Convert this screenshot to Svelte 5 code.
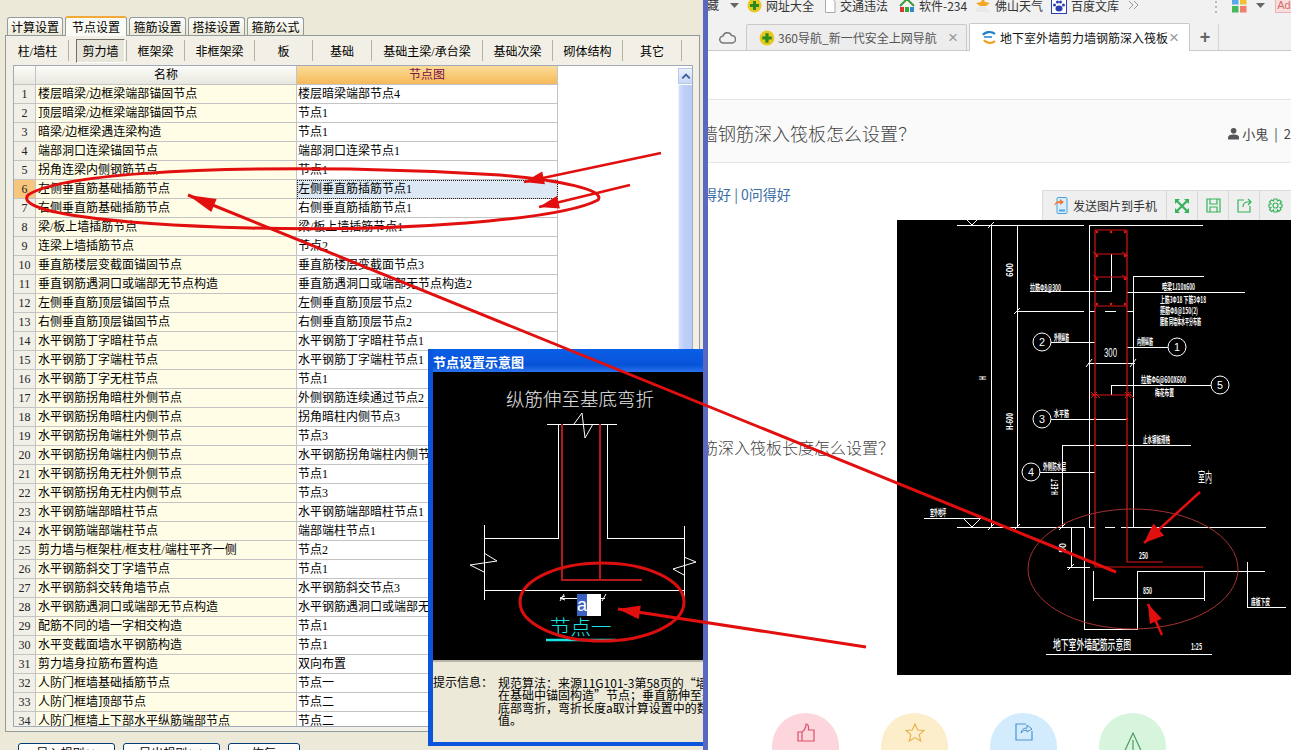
<script>
  const tabs = [
    { label: '计算设置', w: 56 },
    { label: '节点设置', w: 62, active: true },
    { label: '箍筋设置', w: 57 },
    { label: '搭接设置', w: 57 },
    { label: '箍筋公式', w: 57 }
  ];
  const subs = [
    { label: '柱/墙柱', w: 62 },
    { label: '剪力墙', w: 58, active: true },
    { label: '框架梁', w: 58 },
    { label: '非框架梁', w: 70 },
    { label: '板', w: 58 },
    { label: '基础', w: 59 },
    { label: '基础主梁/承台梁', w: 111 },
    { label: '基础次梁', w: 70 },
    { label: '砌体结构', w: 70 },
    { label: '其它', w: 59 }
  ];
  const rows = [
    ['楼层暗梁/边框梁端部锚固节点', '楼层暗梁端部节点4'],
    ['顶层暗梁/边框梁端部锚固节点', '节点1'],
    ['暗梁/边框梁遇连梁构造', '节点1'],
    ['端部洞口连梁锚固节点', '端部洞口连梁节点1'],
    ['拐角连梁内侧钢筋节点', '节点1'],
    ['左侧垂直筋基础插筋节点', '左侧垂直筋插筋节点1'],
    ['右侧垂直筋基础插筋节点', '右侧垂直筋插筋节点1'],
    ['梁/板上墙插筋节点', '梁/板上墙插筋节点1'],
    ['连梁上墙插筋节点', '节点2'],
    ['垂直筋楼层变截面锚固节点', '垂直筋楼层变截面节点3'],
    ['垂直钢筋遇洞口或端部无节点构造', '垂直筋遇洞口或端部无节点构造2'],
    ['左侧垂直筋顶层锚固节点', '左侧垂直筋顶层节点2'],
    ['右侧垂直筋顶层锚固节点', '右侧垂直筋顶层节点2'],
    ['水平钢筋丁字暗柱节点', '水平钢筋丁字暗柱节点1'],
    ['水平钢筋丁字端柱节点', '水平钢筋丁字端柱节点1'],
    ['水平钢筋丁字无柱节点', '节点1'],
    ['水平钢筋拐角暗柱外侧节点', '外侧钢筋连续通过节点2'],
    ['水平钢筋拐角暗柱内侧节点', '拐角暗柱内侧节点3'],
    ['水平钢筋拐角端柱外侧节点', '节点3'],
    ['水平钢筋拐角端柱内侧节点', '水平钢筋拐角端柱内侧节点2'],
    ['水平钢筋拐角无柱外侧节点', '节点1'],
    ['水平钢筋拐角无柱内侧节点', '节点3'],
    ['水平钢筋端部暗柱节点', '水平钢筋端部暗柱节点1'],
    ['水平钢筋端部端柱节点', '端部端柱节点1'],
    ['剪力墙与框架柱/框支柱/端柱平齐一侧', '节点2'],
    ['水平钢筋斜交丁字墙节点', '节点1'],
    ['水平钢筋斜交转角墙节点', '水平钢筋斜交节点3'],
    ['水平钢筋遇洞口或端部无节点构造', '水平钢筋遇洞口或端部无节点构造2'],
    ['配筋不同的墙一字相交构造', '节点1'],
    ['水平变截面墙水平钢筋构造', '节点1'],
    ['剪力墙身拉筋布置构造', '双向布置'],
    ['人防门框墙基础插筋节点', '节点一'],
    ['人防门框墙顶部节点', '节点二'],
    ['人防门框墙上下部水平纵筋端部节点', '节点二']
  ];

  const head = (x1, y1, x2, y2, len, hw) => {
    const d = Math.hypot(x2 - x1, y2 - y1);
    const ux = (x2 - x1) / d;
    const uy = (y2 - y1) / d;
    const bx = x2 - ux * len;
    const by = y2 - uy * len;
    return `${x2},${y2} ${bx - uy * hw},${by + ux * hw} ${bx + uy * hw},${by - ux * hw}`;
  };
  const arrows = [
    { x1: 661, y1: 153, x2: 524, y2: 182, len: 20, hw: 6.5, w: 2.5 },
    { x1: 630, y1: 185, x2: 539, y2: 207, len: 20, hw: 6.5, w: 2.5 },
    { x1: 1116, y1: 572, x2: 188, y2: 195, len: 28, hw: 7, w: 3 },
    { x1: 866, y1: 647, x2: 618, y2: 609, len: 22, hw: 7, w: 3 },
    { x1: 1200, y1: 492, x2: 1144, y2: 543, len: 20, hw: 8, w: 2.5 },
    { x1: 1162, y1: 635, x2: 1148, y2: 604, len: 19, hw: 6.5, w: 2.5 }
  ];
  const dots = [
    [1097, 232], [1111, 232], [1125, 232], [1097, 256], [1125, 256], [1097, 279], [1125, 279],
    [1097, 304], [1111, 304], [1125, 304], [1095, 419], [1127, 419], [1095, 445], [1127, 445]
  ];
</script>

<div class="screen">
  <section class="left">
    <nav class="tabs">
      {#each tabs as t}
        <button class="tab" class:on={t.active} style="width:{t.w}px">{t.label}</button>
      {/each}
    </nav>
    <div class="panel">
      <div class="subs">
        {#each subs as s}
          <div class="sub" style="width:{s.w}px"><span class:pressed={s.active}>{s.label}</span></div>
        {/each}
      </div>
      <div class="grid">
        <div class="table">
          <div class="hd"></div>
          <div class="hd name">名称</div>
          <div class="hd node">节点图</div>
          {#each rows as r, i}
            <div class="num" class:cur={i === 5}>{i + 1}</div>
            <div class="nm">{r[0]}</div>
            <div class="val" class:sel={i === 5}>{r[1]}</div>
          {/each}
        </div>
        <div class="bar">
          <div class="up">
            <svg width="15" height="15" viewBox="0 0 15 15"><path d="M3.5 9.5 7.5 5.5 11.5 9.5" fill="none" stroke="#3f5f9f" stroke-width="2"/></svg>
          </div>
          <div class="thumb"></div>
        </div>
      </div>
    </div>
    <div class="actions">
      <button class="btn b1">导入规则(I)</button>
      <button class="btn b1">导出规则(O)</button>
      <button class="btn b2">恢复</button>
    </div>

    <div class="dialog">
      <div class="title">节点设置示意图</div>
      <div class="canvas">
        <svg width="270" height="288" viewBox="433 372 270 288">
          <text x="580" y="406" class="heading">纵筋伸至基底弯折</text>
          <path class="w" d="M547 424H617M558 424V538H484M607 424V538H684M484 525V600M684 526V600M484 590H684M560 598H605"/>
          <path class="thin" d="M574 424 582 413 585 438 593 424M484 553 497 561 470 565 484 572M684 557 696 562 673 569 684 575M560 601 564 594M602 601 606 594M565 596 560 598 565 600"/>
          <path class="rebar" d="M562 424V580H642M600 424V580"/>
          <rect x="577" y="594" width="10" height="22" fill="#3a62c0"/>
          <rect x="587" y="594" width="14" height="22" fill="#fff"/>
          <text x="577" y="611" class="letter">a</text>
          <text x="550" y="635" class="cyan">节点一</text>
          <path d="M546 640H616" stroke="#19e5e5" stroke-width="2.5"/>
          <ellipse cx="602" cy="602" rx="82" ry="39" fill="none" stroke="#dc0f0f" stroke-width="3"/>
        </svg>
      </div>
      <div class="info">
        <div class="label">提示信息：</div>
        <div class="lines">
          <p>规范算法：来源11G101-3第58页的“墙身竖向分布钢筋</p>
          <p>在基础中锚固构造”节点；垂直筋伸至基础</p>
          <p>底部弯折，弯折长度a取计算设置中的数</p>
          <p>值。</p>
        </div>
      </div>
    </div>
  </section>

  <div class="edge"></div>

  <section class="right">
    <div class="favs">
      <span class="clip">藏</span>
      <svg class="caret" width="9" height="5" viewBox="0 0 9 5"><path d="M0 0H9L4.5 5Z" fill="#666"/></svg>
      <span class="fav f1">
        <svg width="15" height="15" viewBox="0 0 15 15"><circle cx="7.5" cy="7.5" r="7" fill="#e8c81e"/><path d="M7.5 3V12M3 7.5H12" stroke="#2b8a1e" stroke-width="3"/></svg>网址大全
      </span>
      <span class="fav f2">
        <svg width="12" height="15" viewBox="0 0 12 15"><path d="M1.5.5H8L11 3.5V14.500H1.5Z" fill="#fff" stroke="#aaa"/></svg>交通违法
      </span>
      <span class="fav f3">
        <svg width="16" height="15" viewBox="0 0 16 15"><path d="M1 8 8 1 15 8" fill="none" stroke="#3c9a3c" stroke-width="2"/><rect x="1" y="9" width="4" height="5" fill="#d33"/><rect x="6" y="9" width="4" height="5" fill="#3a3"/><rect x="11" y="9" width="4" height="5" fill="#38c"/></svg>软件-234
      </span>
      <span class="fav f4">
        <svg width="16" height="15" viewBox="0 0 16 15"><path d="M8 0 10 4 15 5 11 8 5 8 1 5 6 4Z" fill="#f5a623"/><path d="M1 14Q1 9 6 9 10 7 15 14Z" fill="#e8e8e8"/></svg>佛山天气
      </span>
      <span class="fav f5">
        <svg width="16" height="16" viewBox="0 0 16 16"><rect x=".5" y=".5" width="15" height="15" fill="#fff" stroke="#2a3fb0"/><ellipse cx="8" cy="10.500" rx="3.500" ry="3" fill="#2a3fb0"/><circle cx="3.500" cy="7" r="1.500" fill="#2a3fb0"/><circle cx="6.500" cy="4" r="1.500" fill="#2a3fb0"/><circle cx="9.500" cy="4" r="1.500" fill="#2a3fb0"/><circle cx="12.500" cy="7" r="1.500" fill="#2a3fb0"/></svg>百度文库
      </span>
      <svg class="more" width="11" height="10" viewBox="0 0 11 10"><path d="M1 1 5 5 1 9M6 1 10 5 6 9" fill="none" stroke="#999"/></svg>
      <span class="dots"></span>
      <svg class="apps" width="15" height="15" viewBox="0 0 15 15"><rect width="6.500" height="6.500" fill="#5aa7e8"/><rect x="8" width="6.500" height="6.500" fill="#f2c230"/><rect y="8" width="6.500" height="6.500" fill="#49b85a"/><rect x="8" y="8" width="6.500" height="6.500" fill="#ef7f6a"/></svg>
      <svg class="caret2" width="9" height="5" viewBox="0 0 9 5"><path d="M0 0H9L4.500 5Z" fill="#666"/></svg>
      <span class="ad">Ad</span>
    </div>
    <div class="chrome">
      <svg class="cloud" width="17" height="13" viewBox="0 0 17 13"><path d="M4.500 12A3.500 3.500 0 0 1 4 5 4.500 4.500 0 0 1 12.500 4.500 3.700 3.700 0 0 1 13 12Z" fill="none" stroke="#777" stroke-width="1.500"/></svg>
      <div class="ctab">
        <svg width="16" height="16" viewBox="0 0 15 15"><circle cx="7.500" cy="7.500" r="7" fill="#e8c81e"/><path d="M7.500 3V12M3 7.500H12" stroke="#2b8a1e" stroke-width="3"/></svg>
        <span class="tt">360导航_新一代安全上网导航</span><span class="x">×</span>
      </div>
      <div class="ctab live">
        <svg width="16" height="15" viewBox="0 0 16 15"><path d="M2 5A7 5 0 0 1 14 4" fill="none" stroke="#1b7fd0" stroke-width="2.200"/><path d="M3 7H11" stroke="#1b7fd0" stroke-width="1.500"/><path d="M3 10A6.500 5 0 0 0 14 11" fill="none" stroke="#f0a020" stroke-width="2.200"/></svg>
        <span class="tt">地下室外墙剪力墙钢筋深入筏板</span><span class="x">×</span>
      </div>
      <span class="plus">+</span>
    </div>
    <div class="gap"></div>
    <div class="qhead">
      <h1>墙钢筋深入筏板怎么设置？</h1>
      <div class="user">
        <svg width="12" height="13" viewBox="0 0 12 13"><circle cx="6" cy="3.500" r="3" fill="#555"/><path d="M0 13V11Q0 7.500 6 7.500T12 11V13Z" fill="#555"/></svg>
        <span>小鬼</span><span class="pipe">|</span><span>2</span>
      </div>
    </div>
    <div class="links">得好 | 0问得好</div>

    <div class="picbar">
      <div class="send">
        <svg width="14" height="17" viewBox="0 0 14 17"><rect x="3" y=".5" width="10" height="16" rx="1" fill="#d8ecfa" stroke="#4aa3dc"/><rect x="5" y="12.500" width="6" height="2" fill="#4aa3dc"/><path d="M0 9Q1 4 6 4V2L10 5 6 8V6Q2 6 0 9Z" fill="#f07a30"/></svg>
        发送图片到手机
      </div>
      <div class="pb">
        <svg width="14" height="14" viewBox="0 0 14 14"><path d="M1 1 13 13M13 1 1 13" stroke="#35b35a" stroke-width="2.200"/><path d="M0 0H5L0 5ZM14 0V5L9 0ZM0 14V9L5 14ZM14 14H9L14 9Z" fill="#35b35a"/></svg>
      </div>
      <div class="pb">
        <svg width="15" height="15" viewBox="0 0 15 15"><path d="M1 1H14V14H1ZM4 1V6H11V1M4 14V9H11V14" fill="none" stroke="#35b35a" stroke-width="1.200"/></svg>
      </div>
      <div class="pb">
        <svg width="15" height="15" viewBox="0 0 15 15"><path d="M7 2H1V14H13V8M6 9Q6 4 11 4H14M11 1 14 4 11 7" fill="none" stroke="#35b35a" stroke-width="1.200"/></svg>
      </div>
      <div class="pb last">
        <svg width="15" height="15" viewBox="0 0 15 15"><circle cx="7.500" cy="7.500" r="2.500" fill="none" stroke="#35b35a" stroke-width="1.200"/><path d="M6 1H9L9.500 3 11.500 2 13.500 4 12 5.800 14 6.500V9L12 9.500 13 11.500 11 13.500 9.500 12 9 14H6L5.500 12 3.500 13.500 1.500 11.500 3 9.500 1 9V6.500L3 5.800 1.500 4 3.500 2 5.500 3Z" fill="none" stroke="#35b35a" stroke-width="1.200"/></svg>
      </div>
    </div>

    <div class="body">
      <p class="q2">筋深入筏板长度怎么设置？</p>
      <div class="cad">
        <svg width="394" height="455" viewBox="897 220 394 455">
          <path class="w" d="M957 225H1084M1089 225H1203M991 225V527M1017 225V527M1089 225V527M1133 276V527M1133 276H1204M1017 311H1084M1089 311H1095M1105 311H1116M1127 311H1133M1030 291H1111V254M1127 292H1245M1051 342H1095M1127 347H1168M1088 363H1135M1111 395V385H1211M1051 419H1127M1062 445H1191M1062 445V527M1040 472H1095M957 527H1084M1089 527H1095M1105 527H1115M1121 527H1266M924 518H981M1084 527V629H1137V571H1265M1093 571V601M1204 571V601M1093 598H1205M1071 527V567M1067 567H1090M1247 562V607H1286M1046 654H1212"/>
          <path class="thin" d="M963 518 972 527 981 518M967 220 972 225 977 220M1086 367 1092 359M1130 367 1136 359M988 228 994 222M1014 314 1020 308M988 530 994 524M1014 530 1020 524M1059 530 1065 524M1068 570 1074 564"/>
          <path class="red" d="M1095 230V567H1203M1127 230V562H1163M1095 230H1127M1095 254H1127M1095 277H1127M1095 306H1127M1091 395H1131"/>
          <path class="hatch" d="M1091 392 1097 398M1094 392 1100 398M1091 398 1097 392M1125 392 1131 398M1128 392 1134 398M1125 398 1131 392M1093 252 1098 256M1122 252 1128 256M1093 275 1098 279M1122 275 1128 279"/>
          {#each dots as d}
            <circle cx={d[0]} cy={d[1]} r="1.300" fill="#e01818"/>
          {/each}
          <circle class="c" cx="1042" cy="342" r="9"/><circle class="c" cx="1177" cy="347" r="9"/><circle class="c" cx="1220" cy="385" r="9"/><circle class="c" cx="1042" cy="419" r="9"/><circle class="c" cx="1031" cy="472" r="9"/>
          <text class="t" x="1039" y="346" textLength="6" lengthAdjust="spacingAndGlyphs">2</text>
          <text class="t" x="1174" y="351" textLength="6" lengthAdjust="spacingAndGlyphs">1</text>
          <text class="t" x="1217" y="389" textLength="6" lengthAdjust="spacingAndGlyphs">5</text>
          <text class="t" x="1039" y="423" textLength="6" lengthAdjust="spacingAndGlyphs">3</text>
          <text class="t" x="1028" y="476" textLength="6" lengthAdjust="spacingAndGlyphs">4</text>
          <text class="big" x="1104" y="357" textLength="13" lengthAdjust="spacingAndGlyphs">300</text>
          <text class="s" x="1030" y="291" textLength="31" lengthAdjust="spacingAndGlyphs">拉筋Φ8@300</text>
          <text class="s" x="1162" y="290" textLength="33" lengthAdjust="spacingAndGlyphs">暗梁1J10x600</text>
          <text class="s" x="1160" y="303" textLength="46" lengthAdjust="spacingAndGlyphs">上筋3Φ18 下筋3Φ18</text>
          <text class="s" x="1160" y="314" textLength="38" lengthAdjust="spacingAndGlyphs">箍筋Φ8@150(2)</text>
          <text class="s" x="1160" y="325" textLength="41" lengthAdjust="spacingAndGlyphs">腰筋 同墙体水平分布筋</text>
          <text class="s" x="1054" y="341" textLength="15" lengthAdjust="spacingAndGlyphs">外侧纵筋</text>
          <text class="s" x="1137" y="345" textLength="16" lengthAdjust="spacingAndGlyphs">内侧纵筋</text>
          <text class="s" x="1141" y="383" textLength="45" lengthAdjust="spacingAndGlyphs">拉筋Φ6@600X600</text>
          <text class="s" x="1155" y="396" textLength="19" lengthAdjust="spacingAndGlyphs">梅花布置</text>
          <text class="s" x="1054" y="417" textLength="15" lengthAdjust="spacingAndGlyphs">水平筋</text>
          <text class="s" x="1143" y="443" textLength="27" lengthAdjust="spacingAndGlyphs">止水钢板规格</text>
          <text class="s" x="1043" y="470" textLength="23" lengthAdjust="spacingAndGlyphs">外侧防水层</text>
          <text class="s" x="930" y="516" textLength="16" lengthAdjust="spacingAndGlyphs">室外地坪</text>
          <text class="s" x="1139" y="559" textLength="9" lengthAdjust="spacingAndGlyphs">250</text>
          <text class="s" x="1143" y="594" textLength="9" lengthAdjust="spacingAndGlyphs">850</text>
          <text class="s" x="1251" y="605" textLength="19" lengthAdjust="spacingAndGlyphs">底板下皮</text>
          <text class="s" x="1191" y="650" textLength="11" lengthAdjust="spacingAndGlyphs">1:25</text>
          <text class="s" transform="translate(1013 277) rotate(-90)" textLength="14" lengthAdjust="spacingAndGlyphs">600</text>
          <text class="s" transform="translate(1013 430) rotate(-90)" textLength="17" lengthAdjust="spacingAndGlyphs">H-600</text>
          <text class="s" transform="translate(986 380) rotate(-90)" textLength="4" lengthAdjust="spacingAndGlyphs">H</text>
          <text class="s" transform="translate(1058 495) rotate(-90)" textLength="16" lengthAdjust="spacingAndGlyphs">H-EE-T</text>
          <text class="s" transform="translate(1066 553) rotate(-90)" textLength="10" lengthAdjust="spacingAndGlyphs">50</text>
          <text class="mid" x="1198" y="482" textLength="14" lengthAdjust="spacingAndGlyphs">室内</text>
          <text class="cap" x="1053" y="649" textLength="78" lengthAdjust="spacingAndGlyphs">地下室外墙配筋示意图</text>
          <ellipse cx="1133" cy="569" rx="105" ry="60" fill="none" stroke="#a83232"/>
        </svg>
      </div>
    </div>

    <div class="round">
      <div class="rc pink">
        <svg width="18" height="19" viewBox="0 0 18 19"><path d="M5 9H1V18H5ZM5 9Q9 6 9 1 12 1 11.500 7H17V18H5" fill="none" stroke="#d9506a" stroke-width="1.200"/></svg>
      </div>
      <div class="rc yellow">
        <svg width="20" height="19" viewBox="0 0 20 19"><path d="M10 1 12.700 7 19 7.500 14.200 11.600 15.700 18 10 14.600 4.300 18 5.800 11.600 1 7.500 7.300 7Z" fill="none" stroke="#e8b24a" stroke-width="1.200"/></svg>
      </div>
      <div class="rc blue">
        <svg width="18" height="18" viewBox="0 0 18 18"><path d="M11 1H1V17H17V8" fill="none" stroke="#4f93cf" stroke-width="1.200"/><path d="M6 10Q7 5 12 5V2L17 6 12 9V7Q8 7 6 10Z" fill="none" stroke="#4f93cf"/></svg>
      </div>
      <div class="rc green">
        <svg width="24" height="26" viewBox="0 0 24 26"><path d="M12 1 23 25H1ZM12 8V19" fill="none" stroke="#4e9a62" stroke-width="1.200"/></svg>
      </div>
    </div>
  </section>

  <svg class="marks" width="1291" height="750" viewBox="0 0 1291 750">
    <path d="M350 169C200 167 60 174 28 195 15 211 100 224 250 228 400 232 560 220 598 200 606 190 560 180 500 175 450 172 400 170 350 169Z" fill="none" stroke="#e20f0f" stroke-width="3"/>
    {#each arrows as a}
      <line x1={a.x1} y1={a.y1} x2={a.x2} y2={a.y2} stroke="#e20f0f" stroke-width={a.w}/>
      <polygon points={head(a.x1, a.y1, a.x2, a.y2, a.len, a.hw)} fill="#e20f0f"/>
    {/each}
  </svg>
</div>

<style>
  :global(body) { margin: 0; background: #fff; }
  .screen {
    position: relative;
    display: flex;
    width: 1291px;
    height: 750px;
    overflow: hidden;
    font: 12px "Liberation Serif", "Noto Sans CJK SC", serif;
    color: #000;
  }
  button { font: inherit; color: inherit; padding: 0; }

  .left {
    position: relative;
    width: 703px;
    flex: none;
    padding: 15px 3px 0 5px;
    box-sizing: border-box;
    background: #ece9d8;
  }
  .edge { width: 5px; flex: none; background: #5a68bf; }
  .right { position: relative; flex: 1; min-width: 0; background: #fff; overflow: hidden; }

  .tabs { display: flex; align-items: flex-end; gap: 2px; height: 20px; padding-left: 2px; }
  .tab {
    height: 18px;
    box-sizing: border-box;
    border: 1px solid #919b9c;
    border-bottom: 0;
    border-radius: 3px 3px 0 0;
    background: linear-gradient(#fff, #ece9d8);
  }
  .tab.on {
    height: 20px;
    border-top: 2px solid #f2a93b;
    background: #fbfbf6;
    position: relative;
    top: 1px;
  }
  .panel {
    height: 697px;
    box-sizing: border-box;
    padding: 1px 6px 5px 7px;
    border: 1px solid #919b9c;
    background: #f2f0e6;
  }
  .subs { display: flex; height: 27px; margin-left: -6px; white-space: nowrap; }
  .sub {
    display: flex;
    align-items: center;
    justify-content: center;
    box-sizing: border-box;
    border-right: 1px solid #b5b2a4;
    margin: 3px 0;
  }
  .pressed {
    display: block;
    margin-left: 6px;
    padding: 2px 5px;
    border: 1px solid;
    border-color: #716f64 #fff #fff #716f64;
    background: #e8e6da;
  }
  .grid {
    display: flex;
    height: 662px;
    margin-top: 1px;
    box-sizing: border-box;
    border: 1px solid #a2a9b8;
    background: #fff;
    overflow: hidden;
  }
  .table {
    flex: none;
    width: 662px;
    display: grid;
    grid-template-columns: 22px 261px 261px;
    grid-auto-rows: 19px;
    align-content: start;
    line-height: 18px;
  }
  .table > div { box-sizing: border-box; white-space: nowrap; overflow: hidden; }
  .hd {
    background: linear-gradient(#fbfbf9, #e9e8df);
    border-right: 1px solid #c4c4c4;
    border-bottom: 1px solid #c4c4c4;
    text-align: center;
  }
  .hd.node { background: linear-gradient(#fbdc97, #f5b959); color: #7a0f4a; }
  .num {
    background: #f0efe8;
    text-align: center;
    border-right: 1px solid #c4c4c4;
    border-bottom: 1px solid #c4c4c4;
    color: #222;
  }
  .num.cur { background: #f8c57c; }
  .nm {
    background: #fffde6;
    padding-left: 2px;
    border-right: 1px solid #c4c4c4;
    border-bottom: 1px solid #c4c4c4;
  }
  .val {
    padding-left: 1px;
    border-right: 1px solid #c4c4c4;
    border-bottom: 1px solid #c4c4c4;
  }
  .val.sel { background: #dde8f5; outline: 1px dotted #222; outline-offset: -1px; }
  .bar { margin-left: 2px; width: 16px; display: flex; flex-direction: column; padding-top: 2px; }
  .up {
    height: 16px;
    display: flex;
    align-items: center;
    justify-content: center;
    background: linear-gradient(#eaf1fd, #c7d7f6);
    border: 1px solid #b7c9ea;
    box-sizing: border-box;
  }
  .thumb {
    flex: 1;
    background: linear-gradient(90deg, #d2defa, #bccff6 40%, #b8ccf4);
    border-left: 1px solid #eef3fe;
    border-right: 1px solid #eef3fe;
    margin-top: 1px;
  }
  .actions { display: flex; padding: 11px 0 0 13px; }
  .btn {
    height: 22px;
    margin-right: 8px;
    box-sizing: border-box;
    border: 1px solid #003c74;
    border-radius: 3px;
    background: linear-gradient(#fff, #f0efe6);
    padding-bottom: 3px;
  }
  .b1 { width: 97px; }
  .b2 { width: 72px; }

  .dialog {
    position: absolute;
    left: 428px;
    top: 349px;
    width: 275px;
    height: 397px;
    box-sizing: border-box;
    border: solid #0a55dc;
    border-width: 0 0 4px 5px;
    background: #ece9d8;
    overflow: hidden;
  }
  .title {
    height: 23px;
    margin-left: -5px;
    padding: 6px 0 0 5px;
    box-sizing: border-box;
    background: linear-gradient(#0a5fe6, #0753d8 70%, #2a73ee);
    color: #fff;
    font-size: 13px;
    font-weight: 700;
    line-height: 14px;
    font-family: "Noto Sans CJK SC", sans-serif;
  }
  .canvas { height: 288px; background: #000; }
  .canvas svg { display: block; }
  .w { fill: none; stroke: #fff; stroke-width: 1; shape-rendering: crispEdges; }
  .thin { fill: none; stroke: #fff; stroke-width: 1; }
  .rebar { fill: none; stroke: #b3181c; stroke-width: 2; }
  .heading { font-size: 18.500px; fill: #e6e6e6; text-anchor: middle; font-family: "Noto Sans CJK SC", sans-serif; font-weight: 300; }
  .letter { font-size: 18px; fill: #fff; font-family: "Liberation Sans", sans-serif; }
  .cyan { font-size: 20.500px; fill: #19e5e5; font-family: "Noto Sans CJK SC", sans-serif; font-weight: 300; }
  .info { display: flex; padding: 15px 0 0 0; border-top: 2px solid #b9b6a8; line-height: 12.300px; }
  .label { width: 65px; flex: none; }
  .lines { font-family: "Noto Sans CJK SC", sans-serif; }
  .lines p { margin: 0; white-space: nowrap; }

  .favs {
    position: relative;
    height: 30px;
    margin-top: -7px;
    background: #f1f1f1;
    font-family: "Noto Sans CJK SC", sans-serif;
    color: #333;
    line-height: 14px;
  }
  .clip { position: absolute; left: -1px; top: 5px; }
  .caret { position: absolute; left: 22px; top: 10px; }
  .fav { position: absolute; top: 5px; display: flex; align-items: center; gap: 4px; white-space: nowrap; }
  .f1 { left: 39px; }
  .f2 { left: 116px; }
  .f3 { left: 191px; }
  .f4 { left: 267px; }
  .f5 { left: 343px; }
  .more { position: absolute; left: 420px; top: 7px; }
  .dots { position: absolute; left: 507px; top: 8px; width: 2px; height: 14px; background: repeating-linear-gradient(#bbb 0 2px, transparent 2px 5px); }
  .apps { position: absolute; left: 524px; top: 5px; }
  .caret2 { position: absolute; left: 548px; top: 10px; }
  .ad { position: absolute; left: 567px; top: 5px; width: 18px; height: 15px; background: #f9dede; border: 1px solid #e8b4b4; color: #d76a6a; box-sizing: border-box; line-height: 13px; text-align: center; font-size: 11px; font-family: "Liberation Sans", sans-serif; }

  .chrome {
    position: relative;
    display: flex;
    align-items: flex-end;
    height: 28px;
    padding-left: 38px;
    background: #f1f1f1;
    border-bottom: 1px solid #c9c9c9;
    box-sizing: border-box;
    font-family: "Noto Sans CJK SC", sans-serif;
  }
  .cloud { position: absolute; left: 11px; top: 8px; }
  .ctab {
    width: 221px;
    height: 26px;
    margin-right: 2px;
    box-sizing: border-box;
    display: flex;
    align-items: center;
    padding-left: 12px;
    gap: 3px;
    border: 1px solid #c9c9c9;
    border-bottom: 0;
    border-radius: 2px 2px 0 0;
    background: #ededed;
    color: #555;
    position: relative;
  }
  .ctab.live { height: 28px; background: #fff; color: #111; margin-bottom: -1px; padding-bottom: 1px; padding-left: 11px; }
  .tt { white-space: nowrap; width: 168px; overflow: hidden; }
  .x { position: absolute; left: 201px; top: 3px; color: #999; font-size: 17px; line-height: 20px; font-family: "Liberation Sans", sans-serif; }
  .live .x { left: 199px; top: 4px; }
  .plus { width: 26px; height: 26px; text-align: center; color: #666; font: 700 18px/26px "Liberation Sans", sans-serif; border-right: 1px solid #d4d4d4; }
  .gap { height: 48px; }
  .qhead {
    display: flex;
    justify-content: space-between;
    align-items: center;
    height: 64px;
    padding-top: 4px;
    box-sizing: border-box;
    border: solid #e6e6e6;
    border-width: 1px 0;
    background: #fafafa;
    font-family: "Noto Sans CJK SC", sans-serif;
    color: #444;
    overflow: hidden;
  }
  h1 { margin: 0 0 0 -8px; font-size: 18px; font-weight: 300; white-space: nowrap; }
  .user { display: flex; align-items: center; width: 63px; flex: none; font-size: 13px; gap: 3px; white-space: nowrap; overflow: hidden; }
  .pipe { margin: 0 3px; }
  .links { margin-left: -5px; padding-top: 21px; height: 24px; font: 400 14px/20px "Noto Sans CJK SC", sans-serif; color: #3a6ea5; white-space: nowrap; }
  .picbar {
    position: absolute;
    left: 334px;
    top: 190px;
    right: 0;
    height: 30px;
    display: flex;
    background: #efefef;
    border: solid #dcdcdc;
    border-width: 1px 0 0 1px;
    box-sizing: border-box;
    font-family: "Noto Sans CJK SC", sans-serif;
    color: #333;
    z-index: 1;
  }
  .send { width: 126px; box-sizing: border-box; display: flex; align-items: center; gap: 5px; padding-left: 11px; border-right: 1px solid #d8d8d8; white-space: nowrap; }
  .pb { width: 31px; flex: none; display: flex; align-items: center; justify-content: center; border-right: 1px solid #d8d8d8; box-sizing: border-box; }
  .pb.last { border: 0; }

  .body { position: relative; }
  .q2 {
    position: absolute;
    left: -6px;
    top: 228px;
    margin: 0;
    font: 300 16px/22px "Noto Sans CJK SC", sans-serif;
    color: #444;
    white-space: nowrap;
  }
  .cad { position: absolute; left: 189px; top: 12px; width: 394px; height: 455px; background: #000; }
  .cad svg { display: block; }
  .red { fill: none; stroke: #d81414; stroke-width: 1.200; }
  .hatch { fill: none; stroke: #d81414; stroke-width: 1; }
  .c { fill: #000; stroke: #fff; stroke-width: 1; }
  .t { font-size: 10px; fill: #fff; font-family: "Liberation Sans", sans-serif; }
  .big { font-size: 13px; fill: #fff; font-family: "Liberation Sans", sans-serif; }
  .s { font-size: 9px; font-weight: 700; fill: #fff; font-family: "Noto Sans CJK SC", sans-serif; }
  .mid { font-size: 14px; fill: #fff; font-family: "Noto Sans CJK SC", sans-serif; }
  .cap { font-size: 13px; fill: #fff; font-family: "Noto Sans CJK SC", sans-serif; font-weight: 500; }

  .round { position: absolute; left: 64px; top: 713px; display: flex; gap: 42px; }
  .rc { width: 67px; height: 67px; border-radius: 50%; display: flex; justify-content: center; padding-top: 10px; box-sizing: border-box; }
  .rc.pink { background: #fcd6dc; }
  .rc.yellow { background: #fdeecb; }
  .rc.blue { background: #d2ecfd; }
  .rc.green { background: #d7f5dc; padding-top: 19px; }

  .marks { position: absolute; left: 0; top: 0; pointer-events: none; z-index: 3; }
</style>
